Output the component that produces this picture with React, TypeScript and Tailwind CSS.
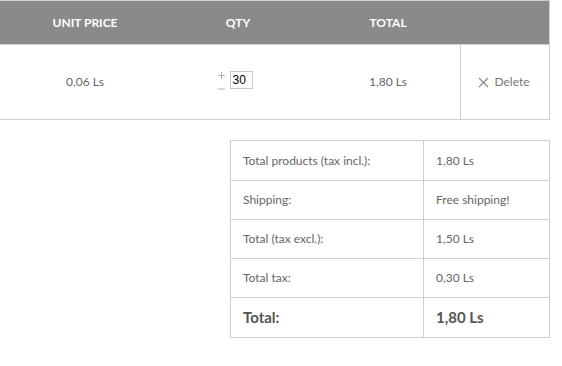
import React from "react";

const summary = [
  { label: "Total products (tax incl.):", value: "1,80 Ls" },
  { label: "Shipping:", value: "Free shipping!" },
  { label: "Total (tax excl.):", value: "1,50 Ls" },
  { label: "Total tax:", value: "0,30 Ls" },
];

export default function App() {
  return (
    <div className="w-[562px] h-[366px] bg-white font-['Lato','Liberation_Sans',sans-serif] text-[#666]">
      <div className="w-[550px] border-y border-r border-[#cfcfcf]">
        {/* header */}
        <div className="flex h-[43px] items-center bg-[#8a8a8a] text-[12px] font-bold text-white">
          <div className="w-[170px] text-center">UNIT PRICE</div>
          <div className="w-[136px] text-center">QTY</div>
          <div className="w-[154px] pl-[10px] text-center">TOTAL</div>
          <div className="flex-1" />
        </div>
        {/* item row */}
        <div className="flex h-[75px] items-stretch border-t border-[#cfcfcf] text-[12px]">
          <div className="flex w-[170px] items-center justify-center">0,06 Ls</div>
          <div className="flex w-[136px] items-center justify-center">
            <div className="flex items-start gap-[5px] pr-[6px] -mt-[4px]">
              <div className="flex h-[19px] w-[7px] flex-col items-center justify-between pt-[1px]">
                <svg width="7" height="7" viewBox="0 0 7 7" fill="none" stroke="#b0b0b0">
                  <path d="M3.5 0V7M0 3.5H7" strokeWidth="1" />
                </svg>
                <svg width="7" height="2" viewBox="0 0 7 2" fill="none" stroke="#b0b0b0">
                  <path d="M0 1H7" strokeWidth="1" />
                </svg>
              </div>
              <div className="flex h-[18px] w-[23px] items-center border border-[#c8c8c8] pl-[2px] font-['Liberation_Sans',sans-serif] text-[12px] text-black">
                30
              </div>
            </div>
          </div>
          <div className="flex w-[154px] items-center justify-center pl-[10px]">1,80 Ls</div>
          <div className="flex flex-1 items-center justify-center gap-[5px] border-l border-[#cfcfcf] pr-[2px] text-[#777]">
            <svg width="11" height="11" viewBox="0 0 11 11" fill="none" stroke="#888">
              <path d="M1 1L10 10M10 1L1 10" strokeWidth="1.1" />
            </svg>
            <span>Delete</span>
          </div>
        </div>
      </div>

      {/* summary */}
      <div className="mt-[20px] ml-[230px] w-[320px] border border-[#cfcfcf] text-[12px] text-[#666]">
        {summary.map((r, i) => (
          <div key={i} className={`flex h-[39px] items-center ${i > 0 ? "border-t border-[#cfcfcf]" : ""}`}>
            <div className="flex h-full w-[193px] items-center border-r border-[#cfcfcf] pl-[12px]">{r.label}</div>
            <div className="flex-1 pl-[12px]">{r.value}</div>
          </div>
        ))}
        <div className="flex h-[40px] items-center border-t border-[#cfcfcf] text-[15px] font-bold text-[#555]">
          <div className="flex h-full w-[193px] items-center border-r border-[#cfcfcf] pl-[12px]">Total:</div>
          <div className="flex-1 pl-[12px]">1,80 Ls</div>
        </div>
      </div>
    </div>
  );
}
